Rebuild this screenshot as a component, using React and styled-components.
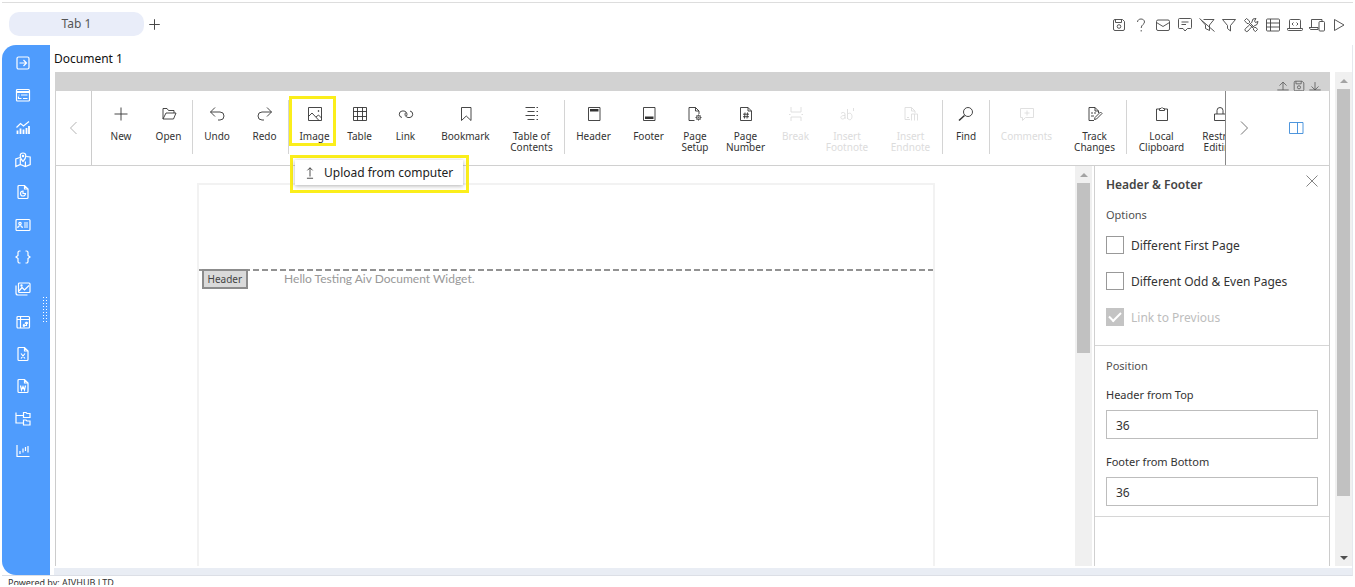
import React from "react";
import styled, { createGlobalStyle, css } from "styled-components";

const GlobalStyle = createGlobalStyle`
  * {
    box-sizing: border-box;
  }
  body {
    margin: 0;
    background: #fff;
    color: #212121;
    font-family: "Noto Sans", "Open Sans", sans-serif;
    font-size: 12px;
  }
  button {
    margin: 0;
    padding: 0;
    border: 0;
    background: none;
    color: inherit;
    font: inherit;
  }
`;

const Svg = styled.svg`
  display: block;
  flex: none;
  fill: none;
  stroke: currentColor;
  stroke-width: ${(p) => p.$weight || 0.9};
  .solid {
    fill: currentColor;
    stroke: none;
  }
`;

const Icon = ({ size = 16, weight, children }) => (
  <Svg
    width={size}
    height={size}
    viewBox="0 0 16 16"
    $weight={weight}
    aria-hidden="true"
  >
    {children}
  </Svg>
);

const shapes = {
  save: (
    <>
      <path d="M2.500 4a1.500 1.500 0 0 1 1.500-1.500h7.500l2 2V12a1.500 1.500 0 0 1-1.500 1.500H4A1.500 1.500 0 0 1 2.500 12zM4.500 2.500v3h6v-3" />
      <circle cx="8" cy="9.500" r="1.800" />
    </>
  ),
  help: (
    <>
      <path d="M4.500 5C4.500 1 11.500 1 11.500 5 11.500 7.500 8.200 7.500 8.200 11" />
      <path d="M8.200 13v1.500" />
    </>
  ),
  mail: (
    <>
      <rect x="1.500" y="3" width="13" height="10.500" rx="1.500" />
      <path d="M1.500 5.500 8 9.500l6.500-4" />
    </>
  ),
  comment: (
    <path d="M2.500 1.500h11a1 1 0 0 1 1 1v8a1 1 0 0 1-1 1h-3L8 14l-2-2.500H2.500a1 1 0 0 1-1-1v-8a1 1 0 0 1 1-1zM4.500 5h7M4.500 7.500h4.500" />
  ),
  filterOff: (
    <path d="M4.500 2.500h10.500l-4.500 5.500v5.500l-4-2V8L2.500 3.500M.500 1.500l15 13" />
  ),
  filter: <path d="M1.500 2.500h13L9.500 8.500v5.500l-3-2.500V8.500z" />,
  tools: (
    <>
      <path d="M1.500 3.500 3.500 1.500l3 2.500v1.500l5 5H13l1.500 2-2 2-2-1.500V11.500l-5-5H4z" />
      <path d="m8.500 6 1.500-4 3-.500-1.500 2.500 1 1.500 2.500-1-1 3-3 1.500M8 8.500 10 10.500M6.500 8 2.500 11.500a1.700 1.700 0 0 0 2.500 2.500L8.500 10" />
    </>
  ),
  grid: (
    <>
      <rect x="1.500" y="2" width="13" height="12" rx="1" />
      <path d="M1.500 6h13M1.500 10h13M5.500 2V14" />
    </>
  ),
  laptopCode: (
    <path d="M2.500 11.500v-8a1 1 0 0 1 1-1h9a1 1 0 0 1 1 1v8M.500 11.500h15v1a1 1 0 0 1-1 1h-13a1 1 0 0 1-1-1zM6.500 5.500 5 7l1.500 1.500M9.500 5.500 11 7 9.500 8.500" />
  ),
  devices: (
    <>
      <path d="M2.500 10.500v-8h10.500v2M0 10.500h9v2H1.500L0 10.500" />
      <rect x="10" y="4.500" width="5.500" height="9.500" rx="1" />
    </>
  ),
  play: <path d="M3.500 2.500v11l9.500-5.500z" />,
  exportBox: (
    <>
      <rect x="2" y="2" width="12" height="12" rx="1.500" />
      <path d="M4.500 8h7M8.500 5l3 3-3 3" />
    </>
  ),
  form: (
    <>
      <rect x="1.500" y="2.500" width="13" height="11.500" rx="1" />
      <path d="M1.500 4.500h13M1.500 5.500h13M3.500 8h1M6 8h6.500M3.500 9.500v2h3M8 11.500h4.500" />
    </>
  ),
  chart: (
    <>
      <path d="M1.500 7.500 5.500 3.500l3 2.500L14 1.500" />
      <path d="M2.500 10.500V14M5.500 8.500V14M8.500 9.500V14M11.500 8V14M14 6V14" strokeWidth="1.800" />
    </>
  ),
  map: (
    <>
      <path d="M5 5.500.800 7v7.500l4.500-2 5 2 4.900-2V5l-4-.500M5.300 7v5.500M10.400 9.500v5" />
      <path d="M8 9.500c-4-4-3.500-8.500 0-8.500s4 4.500 0 8.500z" />
      <circle cx="8" cy="4" r=".700" />
    </>
  ),
  fileChart: (
    <>
      <path d="M3 2.500a1 1 0 0 1 1-1h5.500l3.500 3.500v8.500a1 1 0 0 1-1 1H4a1 1 0 0 1-1-1zM9.500 1.500V5H13" />
      <path d="M10.500 9.500A2.500 2.500 0 1 1 8 7v2.500z" />
    </>
  ),
  card: (
    <>
      <rect x="1" y="2.500" width="14" height="11" rx="1" />
      <circle cx="5" cy="6.500" r="1.200" />
      <path d="M2.800 11c0-3 4.500-3 4.500 0M9 6h4M9 8h4M9 10h4" />
    </>
  ),
  braces: (
    <path d="M5.500 2H4.500A1.500 1.500 0 0 0 3 3.500V6.500L1 8l2 1.500V12.500A1.500 1.500 0 0 0 4.500 14h1M10.500 2h1A1.500 1.500 0 0 1 13 3.500V6.500L15 8l-2 1.500V12.500a1.500 1.500 0 0 1-1.500 1.500h-1" />
  ),
  gallery: (
    <>
      <rect x="3.500" y="2" width="11.500" height="9.500" rx="1" />
      <path d="M1 4.500V12a2 2 0 0 0 2 2h9.500M4 10l3-3.500L9.500 9 14 4.500" />
      <circle cx="6.500" cy="4.500" r=".600" />
    </>
  ),
  pivot: (
    <>
      <rect x="2" y="2.500" width="12.500" height="11.500" rx="1" />
      <path d="M2 5.500h12.500M5.500 2.500V14M8 11.500h3.500V8M8 11.500l1.500-1.500M8 11.500 9.500 13M11.500 8 10 9.500M11.500 8 13 9.500" />
    </>
  ),
  fileX: (
    <path d="M3 2.500a1 1 0 0 1 1-1h5.500l3.500 3.500v8.500a1 1 0 0 1-1 1H4a1 1 0 0 1-1-1zM9.500 1.500V5H13M6 7.500l4 5M10 7.500l-4 5" />
  ),
  fileW: (
    <path d="M3 2.500a1 1 0 0 1 1-1h5.500l3.500 3.500v8.500a1 1 0 0 1-1 1H4a1 1 0 0 1-1-1zM9.500 1.500V5H13M5.500 7.500l1 4.500L8 8.500 9.500 12l1-4.500" />
  ),
  folders: (
    <path d="M1 1.500v10.500h7M1 4.500h7M8.500 1.500h2.500l1 1h3v4H8.500zM8.500 9h2.500l1 1h3v4H8.500z" />
  ),
  candles: (
    <path d="M2 2v11.500h12.500M5 8v3M8 5.500v4M10.500 4v4M13 3v6.500" />
  ),
  plus: <path d="M8 1.500v13M1.500 8h13" />,
  folder: <path d="M2 13V2.500h4l1.500 2h5.500V7M2 13l3-6h10l-2.500 6z" />,
  undo: <path d="M6 1.500 1.500 6 6 10.500M1.500 6h9.500a3.800 3.800 0 0 1 0 8H9" />,
  redo: <path d="M10 1.500 14.500 6 10 10.500M14.500 6H5a3.800 3.800 0 0 0 0 8h2" />,
  image: (
    <>
      <path d="M1.500 1.500h13v13h-13zM1.500 10.500 5 7l7 7.500M9 11l2.500-2 3 3" />
      <circle cx="11.500" cy="5" r=".500" />
    </>
  ),
  table: <path d="M1.500 1.500h13v13h-13zM1.500 5.500h13M1.500 10.500h13M5.500 1.500v13M10.500 1.500v13" />,
  link: (
    <path d="M4 11.500a3.300 3.300 0 0 1 0-6.500h2a3.300 3.300 0 0 1 2.500 5M12 5a3.300 3.300 0 0 1 0 6.500h-2a3.300 3.300 0 0 1-2.500-5" />
  ),
  bookmark: <path d="M3.500 1.500h9.500v13l-4.750-4.500-4.750 4.500z" />,
  toc: (
    <path d="M1.500 1.500h9.500M3.500 5.500h7M1.500 9.500h9.500M3.500 13.500h7M12.500 1.500h1.500M12.500 5.500h1.500M12.500 9.500h1.500M12.500 13.500h1.500" />
  ),
  header: (
    <>
      <path d="M2.500 1.500h11.500v13H2.500z" />
      <path className="solid" d="M4 3h8.500v2.500H4z" />
    </>
  ),
  footer: (
    <>
      <path d="M2.500 1.500h11.500v13H2.500z" />
      <path className="solid" d="M4 10.500h8.500V13H4z" />
    </>
  ),
  pageSetup: (
    <>
      <path d="M7.500 14.500H2v-13h6.500L12 5v3M8.500 1.500V5H12" />
      <circle cx="11.500" cy="11.500" r="2" />
      <circle cx="11.500" cy="11.500" r=".600" />
      <path d="M11.500 8.500v1M11.500 13.500v1M8.500 11.500h1M13.500 11.500h1M9.500 9.500l.500.500M13 13l.500.500M13.500 9.500l-.500.500M9.500 13.500l.500-.500" />
    </>
  ),
  pageNumber: (
    <path d="M2.500 1.500h7.500L13.500 5v9.500h-11zM10 1.500V5h3.500M7 6.500 6.500 12.500M9.500 6.500 9 12.500M5 8.200h6M5 10.700h6" />
  ),
  break: <path d="M3 1v5h10V1M3 15v-4h10v4M1 8.500h1.500M13.500 8.500H15" />,
  footnote: (
    <path d="M2 7.500c1-1.500 4-1.500 4 .500V13M6 9.500c-5-.500-5 3.500-2.500 3.500C5 13 6 12 6 11M8.500 3v10M8.500 8.500c1-2 4.500-2 4.500 2s-3.500 4-4.500 1.500M14.500 2v3" />
  ),
  endnote: (
    <path d="M7 13.500H2v-12h6.500L12 5v2M8.500 1.500V5H12M4 11.500h2M8.500 8v6.500M8.500 8h6v6.500M11.500 8v6.500" />
  ),
  find: (
    <>
      <circle cx="10" cy="6" r="4.500" />
      <path d="M6.500 9.500 1 14.500" strokeWidth="1.500" />
    </>
  ),
  comments: <path d="M1.500 2.500h13v9h-8l-3 3v-3h-2zM8 4.500v5M5.500 7h5" />,
  track: (
    <>
      <path d="M7 14.500H2v-13h6L11.500 5v2M8 1.500V5h3.500M4 7h2M7 7h2M4 10h3" />
      <path d="m7.500 13.500.500-2 5.500-5.500 1.500 1.500-5.500 5.500z" />
    </>
  ),
  clipboard: <path d="M5 3H2.500v11.500h11V3H11M5.500 4.500v-2H7l1-1 1 1h1.500v2z" />,
  lock: <path d="M2.500 8h11v6.500h-11zM5 8V4.500a3 3 0 0 1 6 0V8" />,
  left: <path d="M10.500 2 4.500 8l6 6" />,
  right: <path d="M4 1.500l6.500 6.500L4 14.500" />,
  panel: <path d="M1.500 2.500h13.500v11h-13.500zM9.500 2.500v11" />,
  close: <path d="M2.500 2.500l11 11M13.500 2.500l-11 11" />,
  upload: <path d="M8 2v10M5 5l3-3 3 3M4.500 14h7" />,
  barUpload: <path d="M8 3.500v9M4 7.500l4-4 4 4M1.500 12.500h13" />,
  barDownload: <path d="M8 3.500v9M4 8.500l4 4 4-4M1.500 12.500h13" />,
};

const Shell = styled.div`
  display: flex;
  flex-direction: column;
  height: 100vh;
  padding: 2px;
`;

const TopBar = styled.header`
  display: flex;
  align-items: center;
  justify-content: space-between;
  flex: none;
  height: 43px;
  padding: 0 6px 0 7px;
  border-top: 1px solid #ddd;
`;

const Tabs = styled.nav`
  display: flex;
  align-items: center;
  gap: 4px;
`;

const Tab = styled.button`
  width: 135px;
  height: 24px;
  padding-bottom: 2px;
  border-radius: 10px;
  background: #e9edf9;
  color: #555;
`;

const IconButton = styled.button`
  display: grid;
  place-items: center;
  color: ${(p) => p.$color || "#444"};
`;

const Actions = styled.div`
  display: flex;
  gap: 6px;
  padding-top: 2px;
`;

const Body = styled.div`
  display: flex;
  flex: 1;
  min-height: 0;
  border-right: 1px solid #e6e8ee;
  border-bottom: 1px solid #dcdfe6;
`;

const Sidebar = styled.aside`
  position: relative;
  flex: none;
  width: 48px;
  padding: 10px 6px 0 0;
  border-radius: 14px 0 0 14px;
  background: #4f9cfd;
`;

const SideList = styled.div`
  display: flex;
  flex-direction: column;
  align-items: center;
  justify-content: space-between;
  height: 404px;
`;

const Grip = styled.div`
  position: absolute;
  top: 251px;
  right: 2px;
  width: 6px;
  height: 27px;
  background: radial-gradient(circle, #fff 1px, transparent 1px) 0 0 / 3px 3px;
`;

const Main = styled.main`
  display: flex;
  flex: 1;
  flex-direction: column;
  min-width: 0;
`;

const DocTitle = styled.h1`
  flex: none;
  height: 27px;
  margin: 0;
  padding-left: 4px;
  color: #111;
  font-size: 12px;
  font-weight: 400;
  line-height: 27px;
`;

const Content = styled.div`
  display: flex;
  flex: 1;
  gap: 5px;
  min-height: 0;
  padding-left: 5px;
`;

const BottomStrip = styled.div`
  flex: none;
  height: 7px;
  margin: 2px 0 0 4px;
  background: #e9edf4;
`;

const Widget = styled.section`
  display: flex;
  flex: 1;
  flex-direction: column;
  min-width: 0;
`;

const WidgetBar = styled.div`
  display: flex;
  flex: none;
  justify-content: flex-end;
  gap: 2px;
  height: 19px;
  padding: 7px 8px 0 0;
  overflow: hidden;
  background: #d2d2d2;
  color: #555;
`;

const Ribbon = styled.div`
  position: relative;
  display: flex;
  flex: none;
  height: 75px;
  border: solid #d0d0d0;
  border-width: 0 1px 1px;
`;

const Prev = styled(IconButton)`
  flex: none;
  width: 36px;
  border-right: 1px solid #ccc;
`;

const Strip = styled.div`
  display: flex;
  flex: 1;
  min-width: 0;
  padding-left: 5px;
  overflow: hidden;
`;

const Tool = styled.button`
  display: flex;
  flex: none;
  flex-direction: column;
  align-items: center;
  gap: 9px;
  width: ${(p) => p.$width}px;
  padding-top: 15px;
  color: #333;
  font-size: 10px;
  line-height: 11px;
  &:disabled {
    color: #dcdcdc;
  }
`;

const Separator = styled.span`
  flex: none;
  width: 1px;
  height: 54px;
  margin-top: 9px;
  background: #d4d4d4;
`;

const RibbonEnd = styled.div`
  display: flex;
  flex: none;
  width: 104px;
  border-left: 1px solid #888;
`;

const Next = styled(IconButton)`
  width: 37px;
`;

const PanelToggle = styled(IconButton)`
  flex: 1;
`;

const highlight = css`
  position: absolute;
  border: 3px solid #fbee1b;
`;

const ImageHighlight = styled.div`
  ${highlight}
  top: 5px;
  left: 233px;
  width: 47px;
  height: 50px;
  pointer-events: none;
`;

const MenuHighlight = styled.div`
  ${highlight}
  top: 64px;
  left: 234px;
  z-index: 1;
  padding: 2px 3px 5px 2px;
`;

const MenuItem = styled.button`
  display: flex;
  align-items: center;
  gap: 7px;
  width: 168px;
  height: 25px;
  padding: 0 8px;
  background: #fff;
  box-shadow: 0 1px 4px rgba(0, 0, 0, 0.3);
  color: #222;
`;

const Workspace = styled.div`
  display: flex;
  flex: 1;
  min-height: 0;
  border: solid #ccc;
  border-width: 0 1px;
`;

const Viewer = styled.div`
  flex: 1;
  min-width: 0;
  padding-top: 17px;
`;

const Page = styled.article`
  width: 100%;
  max-width: 738px;
  height: 100%;
  margin: 0 auto;
  padding-top: 84px;
  border: 2px solid #f2f2f2;
  border-bottom: 0;
`;

const HeaderZone = styled.div`
  display: flex;
  gap: 36px;
  padding-left: 3px;
  background: repeating-linear-gradient(90deg, #929292 0 6px, transparent 6px 9px)
    0 0 / 100% 2px no-repeat;
`;

const HeaderTag = styled.span`
  height: 20px;
  padding: 0 4px;
  border: 2px solid #8c8c8c;
  background: #dadada;
  color: #444;
  font-size: 10px;
  line-height: 16px;
`;

const HeaderText = styled.p`
  margin: 0;
  color: #999;
  font-family: Lato, sans-serif;
  font-size: 12px;
  line-height: 20px;
`;

const Track = styled.div`
  display: flex;
  flex: none;
  flex-direction: column;
  width: 17px;
  padding: 0 2px;
  background: #f0f0f0;
`;

const Arrow = styled.span`
  display: grid;
  place-items: center;
  flex: none;
  height: 17px;
  color: ${(p) => (p.$down ? "#505050" : "#a3a3a3")};
  &::before {
    content: "";
    border: solid transparent;
    border-width: ${(p) => (p.$down ? "4px 4px 0" : "0 4px 4px")};
    border-top-color: ${(p) => (p.$down ? "currentColor" : "transparent")};
    border-bottom-color: ${(p) => (p.$down ? "transparent" : "currentColor")};
  }
`;

const Thumb = styled.span`
  flex: ${(p) => p.$size};
  background: #c1c1c1;
`;

const Rest = styled.span`
  flex: ${(p) => p.$size};
`;

const Panel = styled.aside`
  flex: none;
  width: 235px;
  margin-left: 2px;
  border-left: 1px solid #d0d0d0;
`;

const PanelHead = styled.div`
  display: flex;
  justify-content: space-between;
  height: 39px;
  padding: 7px 9px 7px 11px;
`;

const PanelTitle = styled.h2`
  margin: 0;
  color: #444;
  font-size: 12px;
  font-weight: 600;
  line-height: 24px;
`;

const CloseButton = styled(IconButton)`
  align-self: flex-start;
`;

const Group = styled.fieldset`
  margin: 0;
  padding: ${(p) => p.$top || 0}px 11px 10px;
  border: 0;
  border-bottom: 1px solid #d6d6d6;
`;

const Legend = styled.legend`
  float: left;
  width: 100%;
  margin-bottom: 2px;
  padding: 0;
  color: #505050;
  font-size: 11px;
  line-height: 20px;
`;

const Check = styled.label`
  display: flex;
  clear: both;
  align-items: center;
  gap: 7px;
  height: 36px;
  color: ${(p) => (p.$muted ? "#bdbdbd" : "#333")};
`;

const Box = styled.input`
  display: grid;
  place-content: center;
  width: 18px;
  height: 18px;
  margin: 0;
  border: 1px solid #999;
  background: #fff;
  appearance: none;
  &:checked {
    border-color: #c4c4c4;
    background: #c4c4c4;
  }
  &:checked::before {
    content: "";
    width: 10px;
    height: 5px;
    margin-bottom: 3px;
    border: solid #fff;
    border-width: 0 0 2px 2px;
    transform: rotate(-45deg);
  }
`;

const Field = styled.div`
  display: flex;
  clear: both;
  flex-direction: column;
  gap: 5px;
  padding-top: 7px;
  color: #333;
  font-size: 11px;
  line-height: 20px;
  & + & {
    padding-top: 13px;
  }
`;

const NumberInput = styled.input`
  width: 100%;
  height: 29px;
  padding: 2px 9px 0;
  border: 1px solid #bdbdbd;
  border-radius: 0;
  background: #fff;
  color: #333;
  font: inherit;
  font-size: 12px;
`;

const PageFooter = styled.footer`
  flex: none;
  height: 9px;
  padding-left: 6px;
  overflow: hidden;
  color: #333;
  font-size: 9px;
  line-height: 14px;
`;

const actions = [
  ["Save", "save"],
  ["Help", "help"],
  ["Mail", "mail"],
  ["Comment", "comment"],
  ["Clear filter", "filterOff"],
  ["Filter", "filter"],
  ["Tools", "tools"],
  ["Grid", "grid"],
  ["Code", "laptopCode"],
  ["Devices", "devices"],
  ["Run", "play"],
];

const sideItems = [
  ["Export", "exportBox"],
  ["Form", "form"],
  ["Chart", "chart"],
  ["Map", "map"],
  ["Report", "fileChart"],
  ["Card", "card"],
  ["Script", "braces"],
  ["Gallery", "gallery"],
  ["Pivot", "pivot"],
  ["Excel", "fileX"],
  ["Word", "fileW"],
  ["Tree", "folders"],
  ["Candlestick", "candles"],
];

const tools = [
  { label: "New", icon: "plus", width: 48 },
  { label: "Open", icon: "folder", width: 47 },
  null,
  { label: "Undo", icon: "undo", width: 48 },
  { label: "Redo", icon: "redo", width: 47 },
  null,
  { label: "Image", icon: "image", width: 51 },
  { label: "Table", icon: "table", width: 39 },
  { label: "Link", icon: "link", width: 53 },
  { label: "Bookmark", icon: "bookmark", width: 67 },
  { label: "Table of Contents", icon: "toc", width: 65 },
  null,
  { label: "Header", icon: "header", width: 57 },
  { label: "Footer", icon: "footer", width: 53 },
  { label: "Page Setup", icon: "pageSetup", width: 40 },
  { label: "Page Number", icon: "pageNumber", width: 61 },
  { label: "Break", icon: "break", width: 39 },
  { label: "Insert Footnote", icon: "footnote", width: 64 },
  { label: "Insert Endnote", icon: "endnote", width: 63 },
  null,
  { label: "Find", icon: "find", width: 46 },
  null,
  { label: "Comments", icon: "comments", width: 73 },
  { label: "Track Changes", icon: "track", width: 63 },
  null,
  { label: "Local Clipboard", icon: "clipboard", width: 69 },
  { label: "Restrict Editing", icon: "lock", width: 48 },
];

const disabledTools = ["Break", "Insert Footnote", "Insert Endnote", "Comments"];

const Scrollbar = ({ thumb, rest, down }) => (
  <Track>
    <Arrow />
    <Thumb $size={thumb} />
    <Rest $size={rest} />
    {down && <Arrow $down />}
  </Track>
);

const EditorRibbon = () => (
  <Ribbon>
    <Prev aria-label="Previous" $color="#aaa">
      <Icon>{shapes.left}</Icon>
    </Prev>
    <Strip>
      {tools.map((tool, i) =>
        tool ? (
          <Tool
            key={tool.label}
            $width={tool.width}
            disabled={disabledTools.includes(tool.label)}
          >
            <Icon>{shapes[tool.icon]}</Icon>
            {tool.label}
          </Tool>
        ) : (
          <Separator key={i} />
        )
      )}
    </Strip>
    <RibbonEnd>
      <Next aria-label="Next" $color="#666">
        <Icon>{shapes.right}</Icon>
      </Next>
      <PanelToggle aria-label="Properties" $color="#3b8ad9">
        <Icon>{shapes.panel}</Icon>
      </PanelToggle>
    </RibbonEnd>
    <ImageHighlight />
    <MenuHighlight>
      <MenuItem>
        <Icon size={14}>{shapes.upload}</Icon>
        Upload from computer
      </MenuItem>
    </MenuHighlight>
  </Ribbon>
);

const HeaderFooterPanel = () => (
  <Panel>
    <PanelHead>
      <PanelTitle>Header &amp; Footer</PanelTitle>
      <CloseButton aria-label="Close" $color="#777">
        <Icon>{shapes.close}</Icon>
      </CloseButton>
    </PanelHead>
    <Group>
      <Legend>Options</Legend>
      <Check>
        <Box type="checkbox" />
        Different First Page
      </Check>
      <Check>
        <Box type="checkbox" />
        Different Odd &amp; Even Pages
      </Check>
      <Check $muted>
        <Box type="checkbox" defaultChecked disabled />
        Link to Previous
      </Check>
    </Group>
    <Group $top={10}>
      <Legend>Position</Legend>
      <Field>
        <label htmlFor="header-top">Header from Top</label>
        <NumberInput id="header-top" defaultValue="36" />
      </Field>
      <Field>
        <label htmlFor="footer-bottom">Footer from Bottom</label>
        <NumberInput id="footer-bottom" defaultValue="36" />
      </Field>
    </Group>
  </Panel>
);

const App = () => {
  return (
    <>
      <GlobalStyle />
      <Shell>
        <TopBar>
          <Tabs>
            <Tab>Tab 1</Tab>
            <IconButton aria-label="Add tab">
              <Icon size={13} weight={1.2}>
                {shapes.plus}
              </Icon>
            </IconButton>
          </Tabs>
          <Actions>
            {actions.map(([label, icon]) => (
              <IconButton key={icon} aria-label={label}>
                <Icon>{shapes[icon]}</Icon>
              </IconButton>
            ))}
          </Actions>
        </TopBar>
        <Body>
          <Sidebar>
            <SideList>
              {sideItems.map(([label, icon]) => (
                <IconButton key={icon} aria-label={label} $color="#fff">
                  <Icon weight={1.2}>{shapes[icon]}</Icon>
                </IconButton>
              ))}
            </SideList>
            <Grip />
          </Sidebar>
          <Main>
            <DocTitle>Document 1</DocTitle>
            <Content>
              <Widget>
                <WidgetBar>
                  <Icon size={14}>{shapes.barUpload}</Icon>
                  <Icon size={14}>{shapes.save}</Icon>
                  <Icon size={14}>{shapes.barDownload}</Icon>
                </WidgetBar>
                <EditorRibbon />
                <Workspace>
                  <Viewer>
                    <Page>
                      <HeaderZone>
                        <HeaderTag>Header</HeaderTag>
                        <HeaderText>Hello Testing Aiv Document Widget.</HeaderText>
                      </HeaderZone>
                    </Page>
                  </Viewer>
                  <Scrollbar thumb={170} rest={213} />
                  <HeaderFooterPanel />
                </Workspace>
              </Widget>
              <Scrollbar thumb={407} rest={53} down />
            </Content>
            <BottomStrip />
          </Main>
        </Body>
        <PageFooter>Powered by: AIVHUB LTD</PageFooter>
      </Shell>
    </>
  );
};

export default App;
